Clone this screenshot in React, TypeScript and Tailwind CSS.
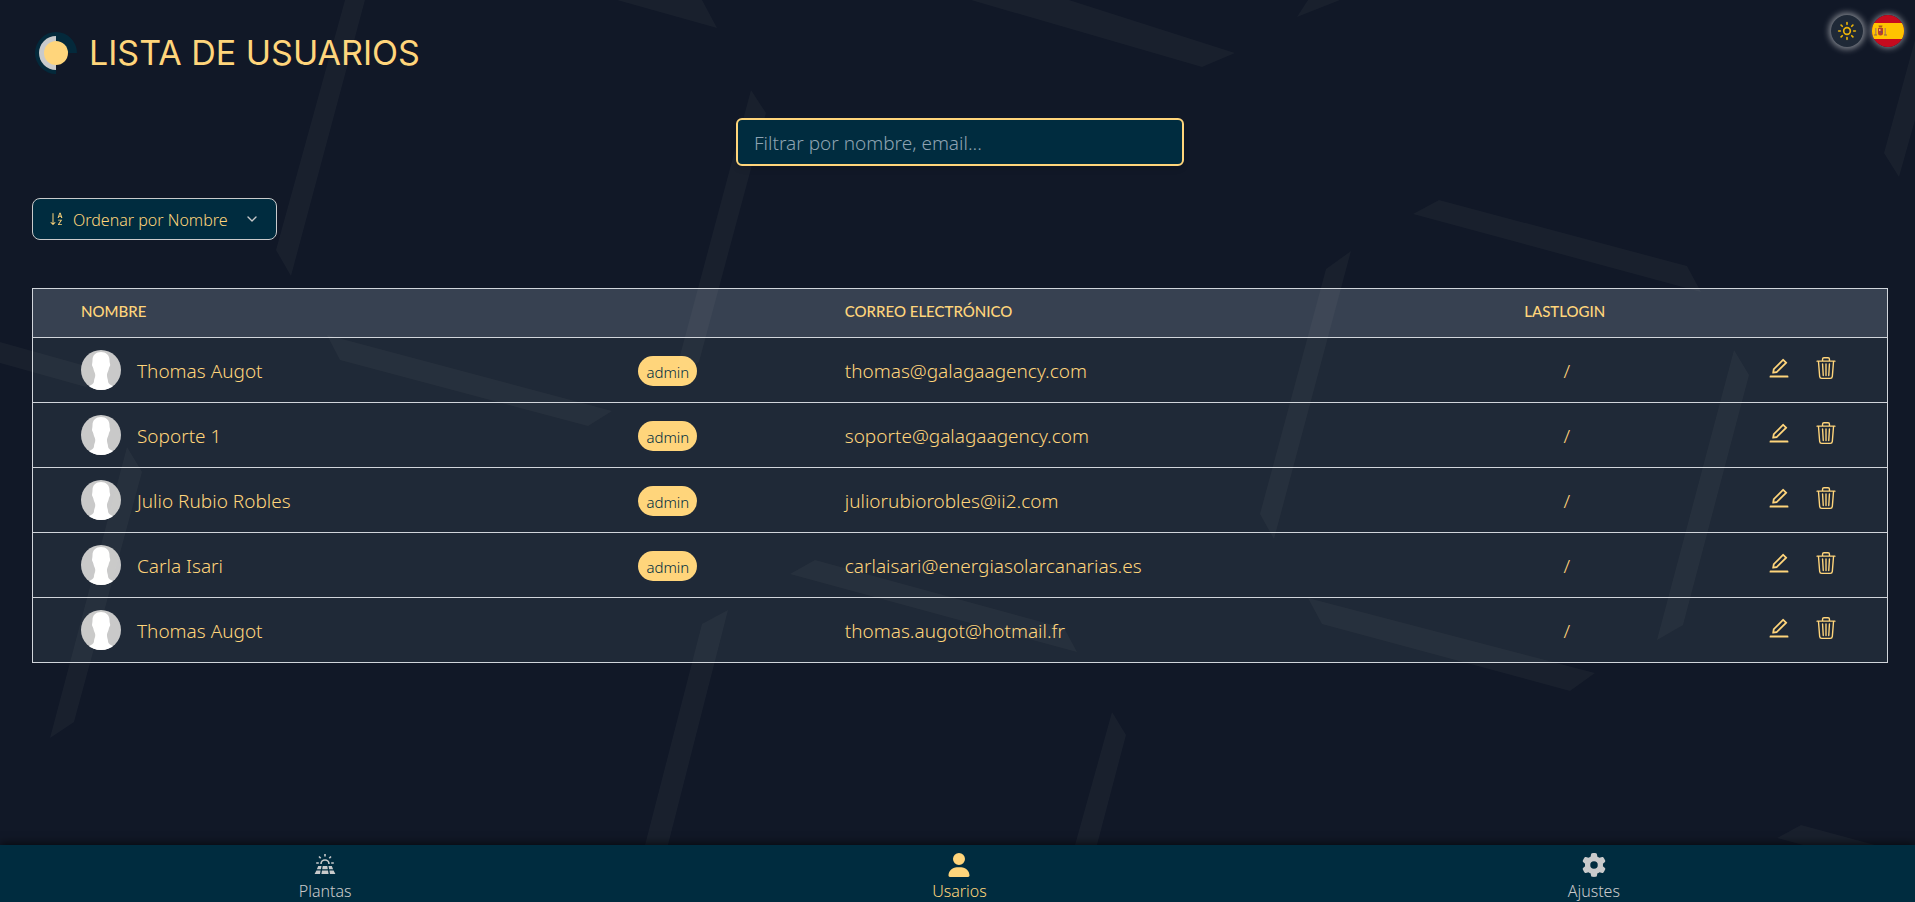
import React from "react";
import { BsTrash3, BsSortAlphaDown } from "react-icons/bs";
import { AiOutlineEdit } from "react-icons/ai";
import { FaUser, FaGear } from "react-icons/fa6";
import { FiChevronDown } from "react-icons/fi";
import { LuSun } from "react-icons/lu";

type User = { name: string; role?: string; email: string };

const users: User[] = [
  { name: "Thomas Augot", role: "admin", email: "thomas@galagaagency.com" },
  { name: "Soporte 1", role: "admin", email: "soporte@galagaagency.com" },
  { name: "Julio Rubio Robles", role: "admin", email: "juliorubiorobles@ii2.com" },
  { name: "Carla Isari", role: "admin", email: "carlaisari@energiasolarcanarias.es" },
  { name: "Thomas Augot", email: "thomas.augot@hotmail.fr" },
];

const strips = [
  "345,0 365,0 291,276 276,250",
  "617,0 702,0 717,28",
  "971,0 1069,0 1235,53 1202,67",
  "1308,0 1340,0 1297,17",
  "1915,40 1884,153 1899,177 1915,120",
  "751,90 766,113 699,362 674,378",
  "0,342 100,370 86,387 0,363",
  "327,335 612,411 588,426 340,360",
  "127,447 142,472 74,722 50,738",
  "790,574 815,560 1064,628 1077,652",
  "702,624 728,610 668,845 645,845",
  "1326,269 1351,251 1274,539 1260,514",
  "1734,350 1749,375 1683,625 1657,640",
  "1308,598 1595,673 1570,691 1322,624",
  "1413,214 1439,200 1687,266 1701,292",
  "1112,712 1126,735 1097,845 1075,845",
  "1777,838 1801,825 1875,845 1803,845",
];

function Backdrop() {
  return (
    <svg
      className="pointer-events-none absolute inset-0 h-full w-full"
      viewBox="0 0 1915 902"
      preserveAspectRatio="xMidYMid slice"
      aria-hidden="true"
    >
      {strips.map((points) => (
        <polygon key={points} points={points} fill="#ffffdc" fillOpacity="0.035" />
      ))}
    </svg>
  );
}

function Logo() {
  return (
    <svg className="size-[42px]" viewBox="0 0 42 42" aria-hidden="true">
      <path d="M21 42A21 21 0 1 1 42 21H21Z" fill="#04293b" />
      <path d="M21 4a17 17 0 0 0 0 34Z" fill="#c9cacb" />
      <circle cx="21" cy="21" r="12" fill="#ffd57b" />
    </svg>
  );
}

function Avatar() {
  return (
    <svg className="size-10 shrink-0 rounded-full" viewBox="0 0 40 40" aria-hidden="true">
      <rect width="40" height="40" fill="#c9c9c9" />
      <path
        d="M20 2c-5 0-8.500 3-8.500 8 0 3-.5 3.500-.5 5 0 1.300 1 1.800 1.200 3 .5 3 1.800 4.500 2 6.500.3 3-1.200 4.500-1.200 6.500 0 3-3 4-7 6v5h28v-5c-4-2-7-3-7-6 0-2-1.200-3.500-1-6.500.2-2 1.500-3.500 2-6.500.2-1.200 1.200-1.700 1.200-3 0-1.500-.7-2-.7-5 0-5-3.500-8-8.500-8Z"
        fill="#fff"
      />
    </svg>
  );
}

function SolarIcon() {
  return (
    <svg className="h-6 w-6" viewBox="0 0 24 24" fill="currentColor" aria-hidden="true">
      <path
        d="M12 1v2.500M6 3.500l1.700 1.700M18 3.500l-1.700 1.700M3.200 10h2.600M18.200 10h2.600M8 11a4 4 0 1 1 8 0"
        fill="none"
        stroke="currentColor"
        strokeWidth="1.600"
      />
      <path d="M5.200 13H8.500l-.6 3.200H3.900ZM9.700 13h4.600l.5 3.200H9.200ZM15.500 13h3.300l1.300 3.200h-4ZM3.400 17.400h4.200L7 21H1.600ZM9 17.400h6l.6 3.600H8.400ZM16.400 17.400h4.200l1.800 3.600H17Z" />
    </svg>
  );
}

function SpainFlag() {
  return (
    <svg className="size-8 rounded-full" viewBox="0 0 32 32" aria-hidden="true">
      <rect width="32" height="32" fill="#c60b1e" />
      <rect y="8" width="32" height="16" fill="#ffc400" />
      <path d="M3 13h1.500v7H3zM12.500 13H14v7h-1.500z" fill="#c08a4a" />
      <path d="M6 13h5v5a2.500 2.500 0 0 1-5 0Z" fill="#b8402a" />
      <path d="M6.500 10.500h4l-.5 2H7Z" fill="#a8581c" />
      <path d="M7 14h1.500v2H7z" fill="#e8b27a" />
      <path d="M8.800 16h1.500v2H8.800z" fill="#7c4a5c" />
      <path d="M2 19.500h3v1H2zM12 19.500h3v1h-3z" fill="#8d6a48" />
    </svg>
  );
}

const navItem = "flex flex-col items-center gap-1 text-base leading-5 font-light";

export default function App() {
  return (
    <div className="relative flex min-h-screen flex-col bg-[#111827] font-['Noto_Sans',sans-serif] text-[#ffd57b]">
      <main className="flex flex-col pt-8 pr-[27px] pl-8">
        <header className="flex items-center gap-3 pl-[3px]">
          <Logo />
          <h1 className="font-['Inter',sans-serif] text-[34px] leading-10 font-normal uppercase">Lista de Usuarios</h1>
        </header>

        <div className="absolute top-[15px] right-[11px] z-10 flex gap-[9px]">
          <button
            type="button"
            aria-label="Cambiar tema"
            className="flex size-8 items-center justify-center rounded-full bg-[#1f2937] text-[#eab308] shadow-[0_0_6px_2px_rgba(255,255,255,0.5)]"
          >
            <LuSun className="size-5" />
          </button>
          <button
            type="button"
            aria-label="Idioma"
            className="size-8 rounded-full shadow-[0_0_6px_1px_rgba(255,255,255,0.5)]"
          >
            <SpainFlag />
          </button>
        </div>

        <input
          type="text"
          aria-label="Filtrar usuarios"
          placeholder="Filtrar por nombre, email..."
          className="relative z-10 mt-11 h-12 w-full max-w-md self-center rounded-md border-2 border-[#ffd57b] bg-[#002c3f] px-4 pt-0.5 text-[19px] font-light placeholder:text-[#8ea3b2] shadow-md outline-none"
        />

        <button
          type="button"
          className="relative z-10 mt-8 flex h-[42px] items-center self-start rounded-lg border border-[#c9cacb] bg-[#002c3f] pr-4 pl-4 text-base font-light"
        >
          <BsSortAlphaDown className="mr-2 size-4" />
          <span className="pt-0.5">Ordenar por Nombre</span>
          <FiChevronDown className="ml-4 size-4 text-[#c9cacb]" />
        </button>

        <table className="mt-12 mb-8 w-full table-fixed border-collapse border border-[#d1d5db] bg-[#1f2937] text-left">
          <colgroup>
            <col className="w-[27.3%]" />
            <col className="w-[13.9%]" />
            <col className="w-[34.6%]" />
            <col className="w-[13.6%]" />
            <col className="w-[10.6%]" />
          </colgroup>
          <thead>
            <tr className="h-[49px] bg-[#374151] font-['Lato',sans-serif] text-[15px] leading-6 uppercase">
              <th scope="col" className="pb-1 pl-12 font-medium">Nombre</th>
              <td />
              <th scope="col" className="pb-1 pl-12 font-medium">Correo electrónico</th>
              <th scope="col" className="pb-1 text-center font-medium">lastLogin</th>
              <td />
            </tr>
          </thead>
          <tbody>
            {users.map((user) => (
              <tr key={user.email} className="h-[65px] border-t border-[#d1d5db] text-[19px] font-light">
                <td className="pl-12">
                  <div className="flex items-center gap-4">
                    <Avatar />
                    <span className="pt-0.5">{user.name}</span>
                  </div>
                </td>
                <td className="pt-0.5 text-center">
                  {user.role && (
                    <span className="inline-block rounded-full bg-[#ffd57b] px-2 pt-1 pb-0.5 align-middle text-[15px] leading-6 font-light text-[#002c3f]">
                      {user.role}
                    </span>
                  )}
                </td>
                <td className="pt-0.5 pl-12">{user.email}</td>
                <td className="pt-0.5 pl-1 text-center">/</td>
                <td className="pr-[50px] pb-1">
                  <div className="flex justify-end gap-6">
                    <button type="button" aria-label={`Editar ${user.name}`}>
                      <AiOutlineEdit className="size-6" />
                    </button>
                    <button type="button" aria-label={`Eliminar ${user.name}`}>
                      <BsTrash3 className="size-[22px]" />
                    </button>
                  </div>
                </td>
              </tr>
            ))}
          </tbody>
        </table>
      </main>

      <Backdrop />

      <nav className="relative z-10 mt-auto grid grid-cols-3 bg-[#002c3f] pt-2 pr-1 pb-px pl-2 shadow-[0_-2px_8px_rgba(0,0,0,0.6)]">
        <a href="#plantas" className={`${navItem} text-[#c9cacb]`}>
          <SolarIcon />
          Plantas
        </a>
        <a href="#usuarios" className={navItem} aria-current="page">
          <FaUser className="size-6" />
          Usarios
        </a>
        <a href="#ajustes" className={`${navItem} text-[#c9cacb]`}>
          <FaGear className="size-6" />
          Ajustes
        </a>
      </nav>
    </div>
  );
}
